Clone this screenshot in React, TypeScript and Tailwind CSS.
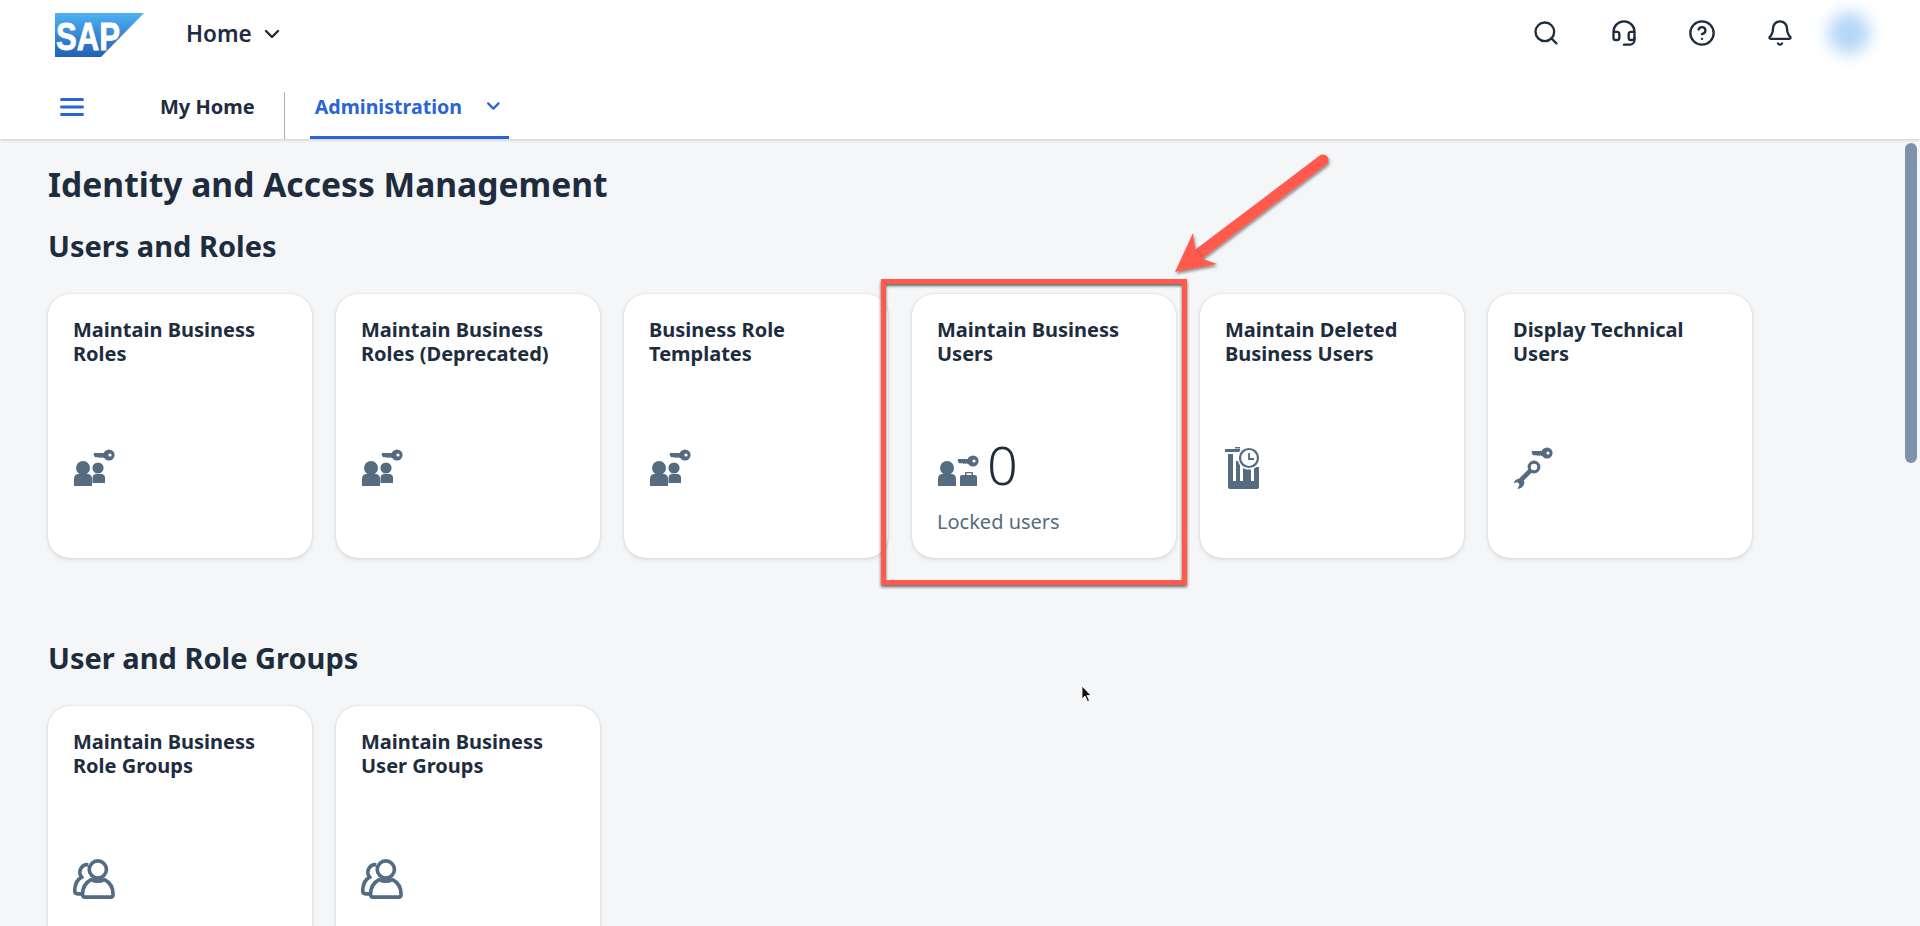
import { Bell, ChevronDown, CircleHelp, Headset, Search } from "lucide-react";
import { ReactNode } from "react";

const ICON = "#556b82";

///////////////////////////////////////////////////////// ICONS ///////////////////////////////////////////////////////////
const Key = ({ x, y }: { x: number; y: number }) => (
  <g transform={`translate(${x} ${y})`}>
    <path d="M0 -2 H10 L12 -3 H13 V3 H10 L8.5 2.2 L7.5 3 L6.5 2.2 L5.5 3 L4.5 2.2 H1 Q-1.2 0 0 -2 Z" fill={ICON} />
    <circle cx="15" cy="0" r="5.6" fill={ICON} />
    <circle cx="16" cy="0" r="1.6" fill="#fff" />
  </g>
);

const PeopleKey = () => (
  <svg width="44" height="40" viewBox="0 0 44 40">
    <Key x={21} y={8} />
    <circle cx="10" cy="21" r="7" fill={ICON} />
    <path d="M1 39 V32 Q1 27 6 27 H14 Q19 27 19 32 V39 Z" fill={ICON} />
    <circle cx="25" cy="21" r="5.6" fill={ICON} />
    <path d="M19.5 36 V31 Q19.5 27 23.5 27 H28 Q32 27 32 31 V36 Z" fill={ICON} />
  </svg>
);

const UserCaseKey = () => (
  <svg width="44" height="40" viewBox="0 0 44 40">
    <Key x={21} y={14} />
    <circle cx="10" cy="21" r="7" fill={ICON} />
    <path d="M1 39 V32 Q1 27 6 27 H14 Q19 27 19 32 V39 Z" fill={ICON} />
    <path d="M23 39 V30 Q23 28 25 28 H28 V26 Q28 25 29 25 H35 Q36 25 36 26 V28 H38 Q40 28 40 30 V39 Z" fill={ICON} />
    <rect x="29.5" y="26.2" width="5" height="1.8" fill="#fff" />
  </svg>
);

const TrashClock = () => (
  <svg width="38" height="46" viewBox="0 0 38 46">
    <path d="M10 0 H15 V1.5 H10 Z M0 2 H15 V5 H0 Z" fill={ICON} />
    <path d="M3 7 H8 V34 H11 V14 H15 V34 H18 V20 H26 V34 H29 V20 H34 V40 Q34 42 32 42 H5 Q3 42 3 40 Z" fill={ICON} />
    <circle cx="24" cy="11" r="11.5" fill="#fff" />
    <circle cx="24" cy="11" r="9" fill="none" stroke={ICON} strokeWidth="2.2" />
    <path d="M24 6 V12 H29" fill="none" stroke={ICON} strokeWidth="1.8" />
  </svg>
);

const WrenchKey = () => (
  <svg width="44" height="46" viewBox="0 0 44 46">
    <Key x={19} y={6} />
    <circle cx="21" cy="20" r="4.8" fill="none" stroke={ICON} strokeWidth="3.2" />
    <path d="M17.5 23.5 L7 34" stroke={ICON} strokeWidth="4.6" />
    <path d="M9 32 Q3 30.5 0.5 36 L4.5 35.2 L6.5 37.5 L4.5 42 Q11 41 11.5 35 Z" fill={ICON} />
  </svg>
);

const Group = () => (
  <svg width="42" height="42" viewBox="0 1 44 44">
    <path d="M16 7 A8 8 0 0 0 9 20 Q2 24 1.8 34 Q1.8 37.5 5 37.5 H10" fill="none" stroke={ICON} strokeWidth="3.8" />
    <circle cx="26" cy="12" r="9" fill="#fff" stroke={ICON} strokeWidth="3.8" />
    <path d="M19 22.5 Q10 27 10 38 Q10 41 12.5 41 H39.5 Q42 41 42 38 Q42 27 33 22.5 Q26 26 19 22.5 Z" fill="#fff" stroke={ICON} strokeWidth="3.8" strokeLinejoin="round" />
  </svg>
);

const SapLogo = () => (
  <svg width="89" height="44" viewBox="0 0 89 44">
    <defs>
      <linearGradient id="sap" x1="0" y1="0" x2="0" y2="1">
        <stop offset="0" stopColor="#4db1f2" />
        <stop offset="1" stopColor="#2360b4" />
      </linearGradient>
    </defs>
    <path d="M0 0 H89 L46 44 H0 Z" fill="url(#sap)" />
    <text x="1" y="37" fill="#fff" stroke="#fff" strokeWidth="0.8" fontFamily="'Liberation Sans', sans-serif" fontWeight="700" fontSize="38" textLength="64" lengthAdjust="spacingAndGlyphs">SAP</text>
  </svg>
);

const Hamburger = () => (
  <svg width="24" height="18" viewBox="0 0 24 18" className="mt-[28px]">
    <path d="M1.5 1.5 H22.5 M1.5 9 H22.5 M1.5 16.5 H22.5" stroke="#2a64d6" strokeWidth="3" strokeLinecap="round" />
  </svg>
);

///////////////////////////////////////////////////////// PARTS ///////////////////////////////////////////////////////////
const Card = ({ lines, icon, children }: { lines: string[]; icon: ReactNode; children?: ReactNode }) => (
  <div className="w-[264px] h-[264px] shrink-0 rounded-[22px] bg-white pl-[25px] pt-[24px] shadow-[0_0_2px_rgba(85,107,130,0.22),0_2px_4px_rgba(85,107,130,0.16)]">
    <div className="text-[20px] leading-[24px] font-bold text-[#1d2d3e]">
      {lines.map((l) => <div key={l}>{l}</div>)}
    </div>
    <div className="mt-[81px] flex items-start">{icon}{children}</div>
  </div>
);

///////////////////////////////////////////////////////// RENDER ///////////////////////////////////////////////////////////
const App = () => {
  return (
    <div className="relative h-[926px] w-[1920px] overflow-hidden bg-[#f5f6f7] font-['Noto_Sans',sans-serif] text-[#1d2d3e]">
      <header className="relative h-[139px] bg-white shadow-[0_1px_3px_rgba(85,107,130,0.3)]">
        <div className="flex h-[70px] items-start pl-[55px] pr-[50px]">
          <div className="mt-[13px]"><SapLogo /></div>
          <div className="ml-[42px] mt-[16px] flex items-center gap-[8px] text-[22.5px] leading-[36px] font-semibold">
            Home <ChevronDown size={24} strokeWidth={2.4} />
          </div>
          <div className="ml-auto flex items-center gap-[50px] pt-[12px]">
            <Search size={28} strokeWidth={2} />
            <Headset size={28} strokeWidth={2} />
            <CircleHelp size={28} strokeWidth={2} />
            <Bell size={28} strokeWidth={2} />
            <div className="-ml-[16px] h-[42px] w-[42px] rounded-full bg-[#b4d6f8] blur-[8px]" />
          </div>
        </div>
        <div className="flex h-[69px] items-stretch pl-[60px]">
          <Hamburger />
          <div className="ml-[76px] mt-[23px] text-[20px] leading-[28px] font-bold">My Home</div>
          <div className="ml-[29px] mt-[22px] w-px bg-[#a9b4be]" />
          <div className="ml-[25px] flex h-full w-[199px] items-start gap-[21px] border-b-[3px] border-[#2a64d6] px-[5px] pt-[23px] text-[#2a64d6]">
            <span className="text-[19.6px] leading-[28px] font-bold">Administration</span>
            <ChevronDown size={24} strokeWidth={2.6} className="mt-[1px]" />
          </div>
        </div>
      </header>

      <main className="pl-[48px]">
        <h1 className="mt-[23px] text-[33.6px] leading-[44px] font-bold">Identity and Access Management</h1>
        <h2 className="mt-[20px] text-[29px] leading-[40px] font-bold">Users and Roles</h2>
        <div className="mt-[28px] flex gap-[24px]">
          <Card lines={["Maintain Business", "Roles"]} icon={<PeopleKey />} />
          <Card lines={["Maintain Business", "Roles (Deprecated)"]} icon={<PeopleKey />} />
          <Card lines={["Business Role", "Templates"]} icon={<PeopleKey />} />
          <Card
            lines={["Maintain Business", "Users"]}
            icon={<UserCaseKey />}
          >
            <div className="-mt-[13px] ml-[6px] flex flex-col">
              <span className="text-[54px] leading-[60px] font-light">0</span>
            </div>
          </Card>
          <Card lines={["Maintain Deleted", "Business Users"]} icon={<TrashClock />} />
          <Card lines={["Display Technical", "Users"]} icon={<WrenchKey />} />
        </div>
        <h2 className="mt-[80px] text-[29px] leading-[40px] font-bold">User and Role Groups</h2>
        <div className="mt-[28px] flex gap-[24px]">
          <Card lines={["Maintain Business", "Role Groups"]} icon={<Group />} />
          <Card lines={["Maintain Business", "User Groups"]} icon={<Group />} />
        </div>
      </main>

      {/* things on top of the page: subtitle of the locked tile, scrollbar, annotation, cursor */}
      <div className="absolute left-[937px] top-[509px] text-[20px] leading-[26px] text-[#556b82]">Locked users</div>
      <div className="absolute left-[1905px] top-[143px] h-[320px] w-[12px] rounded-full bg-[#7d93ab]" />
      <div className="absolute left-[881px] top-[279px] h-[306px] w-[306px] border-[5px] border-[#ff5a4d] shadow-[0_2px_3px_rgba(0,0,0,0.6),inset_0_2px_3px_rgba(0,0,0,0.6)]" />
      <svg className="absolute left-[1160px] top-[145px]" width="180" height="140" viewBox="0 0 180 140">
        <defs>
          <filter id="sh" x="-20%" y="-20%" width="140%" height="140%">
            <feDropShadow dx="1" dy="2" stdDeviation="1.5" floodColor="#000" floodOpacity="0.45" />
          </filter>
        </defs>
        <path d="M163 15 L40 108" stroke="#ff5a4d" strokeWidth="11" strokeLinecap="round" filter="url(#sh)" />
        <path d="M15 127 L33 88 L35 103 L43 114 L57 119 Z" fill="#ff5a4d" filter="url(#sh)" />
      </svg>
      <svg className="absolute left-[1081px] top-[685px]" width="12" height="18" viewBox="0 0 12 18">
        <path d="M1 1 V14 L4 11 L6.5 16.5 L8.5 15.5 L6 10.5 H10 Z" fill="#111" stroke="#fff" strokeWidth="0.8" />
      </svg>
    </div>
  );
};

export default App;
